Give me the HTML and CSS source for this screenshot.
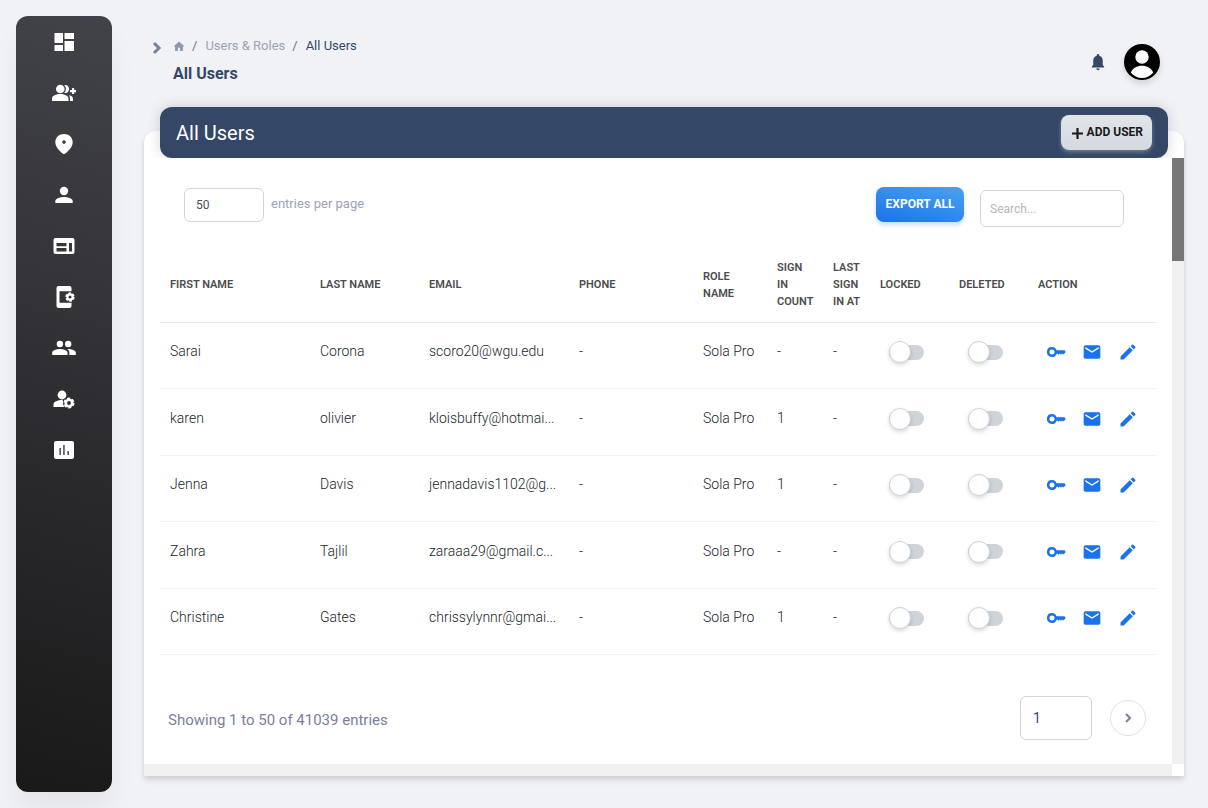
FILE: index.html
```html
<!DOCTYPE html>
<html lang="en">
<head>
<meta charset="utf-8">
<meta name="viewport" content="width=device-width, initial-scale=1">
<title>All Users</title>
<link rel="stylesheet" href="styles.css">
</head>
<body>
<svg class="sprite" aria-hidden="true">
  <symbol id="key" viewBox="0 0 20 20"><path fill-rule="evenodd" d="M6 5a5 5 0 0 1 4.600 3.300H18.500L19.700 10L17.800 12.200H17L16 11.500L15 12.800L13.800 11.600L12.500 12.800L11.500 11.700H10.600A5 5 0 1 1 6 5zM6 7.500a2.500 2.500 0 1 0 0 5a2.500 2.500 0 0 0 0-5z"/></symbol>
  <symbol id="mail" viewBox="0 0 24 24"><path d="M20 4H4c-1.100 0-1.990.9-1.990 2L2 18c0 1.100.9 2 2 2h16c1.100 0 2-.9 2-2V6c0-1.100-.9-2-2-2zm0 4l-8 5-8-5V6l8 5 8-5v2z"/></symbol>
  <symbol id="edit" viewBox="0 0 24 24"><path d="M3 17.250V21h3.750L17.810 9.940l-3.750-3.750L3 17.250zM20.710 7.040c.39-.39.39-1.020 0-1.410l-2.340-2.340a1 1 0 0 0-1.410 0l-1.830 1.830 3.750 3.750 1.830-1.830z"/></symbol>
</svg>
<div class="app">
  <nav class="sidebar" aria-label="Main">
    <a href="#" aria-label="Dashboard"><svg class="nav-icon" viewBox="0 0 26 24"><path d="M3.500 3H12v10H3.500zM3.500 15H12v6H3.500zM13.500 3H23v6h-9.500zM13.500 11H23v10h-9.500z"/></svg></a>
    <a href="#" aria-label="Add users"><svg class="nav-icon" viewBox="0 0 26 24"><circle cx="9.300" cy="8" r="4.300"/><path d="M13.300 4.200c2.400-.9 4.800 1 4.800 3.800s-2.400 4.700-4.800 3.800c2.200-2.200 2.200-5.400 0-7.600zM1 20v-2.500C1 14.500 5.500 13 9.300 13s8.200 1.500 8.200 4.500V20zM18 14c2.500.7 4 2 4 3.800V20h-3v-2.300c0-1.400-.3-2.600-1-3.700zM21 7h2.200v2H25v2.200h-1.800V13H21v-1.800h-2V9h2z"/></svg></a>
    <a href="#" aria-label="Locations"><svg class="nav-icon" viewBox="0 0 26 24"><path fill-rule="evenodd" d="M13 2c-5 0-8.700 3.500-8.700 8.200C4.300 15.500 10 20.500 13 22.200c3-1.700 8.700-6.700 8.700-12C21.700 5.500 18 2 13 2zm0 6.300a1.800 1.800 0 1 1 0 3.600a1.800 1.800 0 0 1 0-3.600z"/></svg></a>
    <a href="#" aria-label="Profile"><svg class="nav-icon" viewBox="0 0 26 24"><circle cx="13" cy="8" r="4.200"/><path d="M4.300 20v-2c0-2.700 5.800-4 8.700-4s8.700 1.300 8.700 4v2z"/></svg></a>
    <a href="#" aria-label="Content"><svg class="nav-icon" viewBox="0 0 26 24"><path fill-rule="evenodd" d="M4.500 4h17a2 2 0 0 1 2 2v12a2 2 0 0 1-2 2h-17a2 2 0 0 1-2-2V6a2 2 0 0 1 2-2zM5.500 9v3.300h10V9zM5.500 14v3.500h10V14zM18 9v8.500h3V9z"/></svg></a>
    <a href="#" aria-label="App settings"><svg class="nav-icon" viewBox="0 0 26 24"><path d="M20.500 6.300H8.500v11.500h12V21a2 2 0 0 1-2 2h-11a2 2 0 0 1-2-2V3a2 2 0 0 1 2-2h11a2 2 0 0 1 2 2z"/><circle class="gear-teeth" cx="19" cy="12" r="3.700"/><circle class="gear-ring" cx="19" cy="12" r="2.600"/></svg></a>
    <a href="#" aria-label="Groups"><svg class="nav-icon" viewBox="0 0 26 24"><circle cx="8.900" cy="8" r="3.200"/><circle cx="17.200" cy="8" r="3.200"/><path d="M1.200 19v-2.500c0-2.300 4.800-3.500 7.700-3.500s7.600 1.200 7.600 3.500V19zM17.200 13c2.800 0 7.600 1.200 7.600 3.500V19h-6.500v-2.500c0-1.500-.8-2.600-2-3.400z"/></svg></a>
    <a href="#" aria-label="Account settings"><svg class="nav-icon" viewBox="0 0 26 24"><circle cx="11" cy="8" r="4.400"/><path d="M2.500 20v-2.500c0-3 4-4.500 9-4.500l3.500 7z"/><circle class="gear-gap" cx="18" cy="16" r="6"/><circle class="gear-teeth large" cx="18" cy="16" r="4.500"/><circle class="gear-ring large" cx="18" cy="16" r="3.200"/></svg></a>
    <a href="#" aria-label="Reports"><svg class="nav-icon" viewBox="0 0 26 24"><path fill-rule="evenodd" d="M5 3h16a2 2 0 0 1 2 2v14a2 2 0 0 1-2 2H5a2 2 0 0 1-2-2V5a2 2 0 0 1 2-2zM8.500 10v7h1.300v-7zM12.300 7v10h1.300V7zM16.500 13v4h1.300v-4z"/></svg></a>
  </nav>

  <main class="main">
    <header class="topbar">
      <button class="menu-toggle" type="button" aria-label="Open menu"><svg viewBox="0 0 10 14"><path d="M2 2l5 5-5 5"/></svg></button>
      <div class="heading">
        <nav class="crumbs" aria-label="Breadcrumb">
          <a href="#" aria-label="Home"><svg class="home" viewBox="0 0 20 18"><path d="M8 18v-6h4v6h5V10h3L10 1 0 10h3v8z"/></svg></a>
          <span class="slash">/</span><a href="#">Users &amp; Roles</a><span class="slash">/</span><span class="current">All Users</span>
        </nav>
        <h1>All Users</h1>
      </div>
      <button class="bell" type="button" aria-label="Notifications"><svg viewBox="0 0 16 20"><path d="M8 0c-.9 0-1.500.7-1.500 1.500v.6C3.900 2.700 2.400 5 2.400 8v5L.8 14.800v1h14.400v-1L13.600 13V8c0-3-1.500-5.300-4.100-5.900v-.6C9.500.7 8.900 0 8 0zM6 17a2 2 0 0 0 4 0z"/></svg></button>
      <button class="avatar" type="button" aria-label="Account"><svg viewBox="0 0 36 36"><circle cx="18" cy="18" r="18"/><g fill="#fff"><circle cx="18" cy="13" r="6.700"/><path d="M6.800 28.500C8.500 24.300 13 21.800 18 21.800s9.500 2.500 11.200 6.700C26.500 32 22.500 34 18 34S9.500 32 6.800 28.500z"/></g></svg></button>
    </header>

    <section class="card">
      <div class="card-bar">
        <h2>All Users</h2>
        <button class="add" type="button"><svg viewBox="0 0 10 10"><path d="M5 0v10M0 5h10"/></svg>ADD USER</button>
      </div>
      <div class="scroller">
        <div class="content">
          <div class="toolbar">
            <input class="page-size" id="page-size" type="text" value="50">
            <label for="page-size">entries per page</label>
            <button class="export" type="button">EXPORT ALL</button>
            <input class="search" type="text" placeholder="Search..." aria-label="Search">
          </div>
          <table>
            <colgroup><col class="w-150"><col class="w-109"><col class="w-150"><col class="w-124"><col class="w-74"><col class="w-56"><col class="w-47"><col class="w-79"><col class="w-79"><col class="w-128"></colgroup>
            <thead><tr><th>FIRST NAME</th><th>LAST NAME</th><th>EMAIL</th><th>PHONE</th><th>ROLE<br>NAME</th><th>SIGN<br>IN<br>COUNT</th><th>LAST<br>SIGN<br>IN AT</th><th>LOCKED</th><th>DELETED</th><th>ACTION</th></tr></thead>
            <tbody>
              <tr><td>Sarai</td><td>Corona</td><td>scoro20@wgu.edu</td><td>-</td><td>Sola Pro</td><td>-</td><td>-</td><td><input class="switch" type="checkbox" aria-label="Locked"></td><td><input class="switch" type="checkbox" aria-label="Deleted"></td><td><div class="actions"><button type="button" aria-label="Reset password"><svg><use href="#key"/></svg></button><button type="button" aria-label="Email"><svg><use href="#mail"/></svg></button><button type="button" aria-label="Edit"><svg><use href="#edit"/></svg></button></div></td></tr>
              <tr><td>karen</td><td>olivier</td><td>kloisbuffy@hotmai...</td><td>-</td><td>Sola Pro</td><td>1</td><td>-</td><td><input class="switch" type="checkbox" aria-label="Locked"></td><td><input class="switch" type="checkbox" aria-label="Deleted"></td><td><div class="actions"><button type="button" aria-label="Reset password"><svg><use href="#key"/></svg></button><button type="button" aria-label="Email"><svg><use href="#mail"/></svg></button><button type="button" aria-label="Edit"><svg><use href="#edit"/></svg></button></div></td></tr>
              <tr><td>Jenna</td><td>Davis</td><td>jennadavis1102@g...</td><td>-</td><td>Sola Pro</td><td>1</td><td>-</td><td><input class="switch" type="checkbox" aria-label="Locked"></td><td><input class="switch" type="checkbox" aria-label="Deleted"></td><td><div class="actions"><button type="button" aria-label="Reset password"><svg><use href="#key"/></svg></button><button type="button" aria-label="Email"><svg><use href="#mail"/></svg></button><button type="button" aria-label="Edit"><svg><use href="#edit"/></svg></button></div></td></tr>
              <tr><td>Zahra</td><td>Tajlil</td><td>zaraaa29@gmail.c...</td><td>-</td><td>Sola Pro</td><td>-</td><td>-</td><td><input class="switch" type="checkbox" aria-label="Locked"></td><td><input class="switch" type="checkbox" aria-label="Deleted"></td><td><div class="actions"><button type="button" aria-label="Reset password"><svg><use href="#key"/></svg></button><button type="button" aria-label="Email"><svg><use href="#mail"/></svg></button><button type="button" aria-label="Edit"><svg><use href="#edit"/></svg></button></div></td></tr>
              <tr><td>Christine</td><td>Gates</td><td>chrissylynnr@gmai...</td><td>-</td><td>Sola Pro</td><td>1</td><td>-</td><td><input class="switch" type="checkbox" aria-label="Locked"></td><td><input class="switch" type="checkbox" aria-label="Deleted"></td><td><div class="actions"><button type="button" aria-label="Reset password"><svg><use href="#key"/></svg></button><button type="button" aria-label="Email"><svg><use href="#mail"/></svg></button><button type="button" aria-label="Edit"><svg><use href="#edit"/></svg></button></div></td></tr>
            </tbody>
          </table>
          <footer class="pager">
            <p>Showing 1 to 50 of 41039 entries</p>
            <input class="page-number" type="text" value="1" aria-label="Page">
            <button class="next" type="button" aria-label="Next page"><svg viewBox="0 0 8 10"><path d="M2 1l4 4-4 4"/></svg></button>
          </footer>
        </div>
        <div class="track-y"><div class="thumb"></div></div>
        <div class="track-x"></div>
      </div>
    </section>
  </main>
</div>
</body>
</html>
```

FILE: styles.css
```css
* { box-sizing: border-box; }
body {
  margin: 0;
  background: #f0f2f5;
  color: #344767;
  font-family: Roboto, "Liberation Sans", sans-serif;
  font-size: 14px;
}
h1, h2, p { margin: 0; }
a { color: inherit; text-decoration: none; }
button { border: 0; padding: 0; background: none; font: inherit; color: inherit; }
input { font: inherit; color: #495057; border: 1px solid #d2d6da; background: #fff; border-radius: 6px; margin: 0; min-width: 0; }
svg { display: block; }
.sprite { display: none; }

.app { display: flex; min-height: 100vh; }

.sidebar {
  flex: none;
  width: 96px;
  margin: 16px 0 16px 16px;
  padding-top: 14px;
  display: flex;
  flex-direction: column;
  align-items: center;
  gap: 27px;
  border-radius: 12px;
  background: linear-gradient(195deg, #42424a, #191919);
  box-shadow: 0 20px 27px rgba(0, 0, 0, 0.05);
}
.nav-icon { width: 26px; height: 24px; fill: #fff; }
.gear-gap { fill: #2d2d31; }
.gear-teeth { fill: none; stroke: #fff; stroke-width: 2; stroke-dasharray: 2.400 1.475; }
.gear-teeth.large { stroke-dasharray: 2.900 1.812; }
.gear-ring { fill: none; stroke: #fff; stroke-width: 2.200; }
.gear-ring.large { stroke-width: 2.600; }

.main {
  flex: 1;
  min-width: 0;
  display: flex;
  flex-direction: column;
  padding: 0 24px 32px 32px;
}

.topbar { display: flex; align-items: flex-start; padding: 36px 24px 0 8px; min-height: 131px; }
.menu-toggle { width: 10px; margin: 5px 11px 0 0; }
.menu-toggle svg { height: 14px; width: 10px; fill: none; stroke: #7b809a; stroke-width: 3; }
.heading { flex: 1; }
.crumbs { display: flex; align-items: center; line-height: 20px; font-size: 13px; color: #9aa3b3; }
.home { width: 12px; height: 10px; fill: #8e98ab; }
.slash { margin: 0 8px 0 7px; color: #6c757d; }
.current { color: #344767; }
h1 { margin-top: 6px; font-size: 16px; line-height: 24px; font-weight: 700; }
.bell { margin: 18px 18px 0 0; }
.bell svg { width: 16px; height: 17px; fill: #344767; }
.avatar { margin-top: 8px; border-radius: 50%; box-shadow: 0 4px 6px rgba(0, 0, 0, 0.12); }
.avatar svg { width: 36px; height: 36px; }

.card {
  flex: 1;
  display: flex;
  flex-direction: column;
  background: #fff;
  border-radius: 12px 12px 0 0;
  box-shadow: 0 4px 6px rgba(0, 0, 0, 0.1), 0 2px 4px rgba(0, 0, 0, 0.06);
}
.card-bar {
  margin: -24px 16px 0;
  padding: 8px 16px;
  display: flex;
  align-items: center;
  justify-content: space-between;
  border-radius: 12px;
  background: #344767;
  box-shadow: 0 0 14px rgba(0, 0, 0, 0.16);
}
h2 { font-size: 20px; line-height: 24px; font-weight: 400; color: #fff; }
.add {
  height: 35px;
  padding: 0 9px 2px 11px;
  display: flex;
  align-items: center;
  gap: 4px;
  border-radius: 8px;
  background: linear-gradient(#e1e4e9, #d5d9e0);
  box-shadow: 0 2px 4px rgba(206, 212, 218, 0.4);
  color: #191919;
  font-size: 12px;
  font-weight: 700;
}
.add svg { width: 11px; height: 11px; margin-top: 3px; stroke: #191919; stroke-width: 2; }

.scroller {
  flex: 1;
  display: grid;
  grid-template-columns: minmax(0, 1fr) 12px;
  grid-template-rows: 1fr 12px;
  background: #fff;
}
.content { padding: 0 16px; }
.track-y { background: #f0f0f0; }
.track-x { background: #f0f0f0; }
.thumb { height: 17%; background: #777; }

.toolbar { display: flex; align-items: flex-start; padding: 29px 32px 21px 24px; font-size: 13px; }
.page-size { width: 80px; height: 34px; margin-top: 1px; padding: 0 11px; font-size: 12px; }
.toolbar label { flex: 1; margin-left: 7px; line-height: 34px; color: #9da2b6; }
.export {
  height: 35px;
  width: 88px;
  padding-bottom: 2px;
  border-radius: 8px;
  background: linear-gradient(195deg, #49a3f1, #1a73e8);
  box-shadow: 0 3px 4px rgba(26, 115, 232, 0.25);
  color: #fff;
  font-size: 12px;
  font-weight: 700;
}
.search { width: 144px; height: 37px; margin: 3px 0 0 16px; padding: 0 9px; font-size: 12px; }
.search::placeholder { color: #b4b7ba; opacity: 1; }

table { width: 100%; table-layout: fixed; border-collapse: collapse; }
.w-150 { width: 150px; }
.w-109 { width: 109px; }
.w-124 { width: 124px; }
.w-74 { width: 74px; }
.w-56 { width: 56px; }
.w-47 { width: 47px; }
.w-79 { width: 79px; }
.w-128 { width: 128px; }
th {
  height: 74px;
  padding: 0 0 0 10px;
  text-align: left;
  font-size: 11px;
  line-height: 17px;
  font-weight: 600;
  color: #4c4c4c;
  border-bottom: 1px solid #e6e7ea;
}
td {
  height: 66px;
  padding: 0 0 8px 10px;
  white-space: nowrap;
  font-size: 14px;
  line-height: 20px;
  font-weight: 300;
  color: #212529;
  border-bottom: 1px solid #f0f2f5;
}
tr:nth-child(even) td { height: 67px; }
.switch {
  appearance: none;
  display: flex;
  align-items: center;
  width: 35px;
  height: 15px;
  margin: 2px 0 0 9px;
  border: 0;
  border-radius: 8px;
  background: #ced4da;
}
.switch::before {
  content: "";
  flex: none;
  width: 20px;
  height: 20px;
  border: 1px solid #ced4da;
  border-radius: 50%;
  background: #fff;
  box-shadow: 0 2px 4px rgba(0, 0, 0, 0.15);
}
.actions { display: flex; gap: 16px; padding: 2px 0 0 8px; }
.actions svg { width: 20px; height: 20px; fill: #1a73e8; }

.pager { display: flex; align-items: center; padding: 41px 10px 24px 8px; }
.pager p { flex: 1; font-size: 15px; line-height: 20px; padding-top: 4px; color: #7b809a; }
.page-number { width: 72px; height: 44px; padding: 0 12px; color: #344767; }
.next {
  width: 36px;
  height: 36px;
  margin-left: 18px;
  display: grid;
  place-items: center;
  border: 1px solid #dee2e6;
  border-radius: 50%;
}
.next svg { width: 8px; height: 10px; fill: none; stroke: #7b809a; stroke-width: 2; }
```
